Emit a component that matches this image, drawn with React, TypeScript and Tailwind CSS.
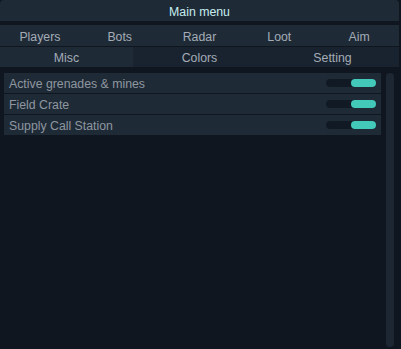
import React from "react";

const topTabs = ["Players", "Bots", "Radar", "Loot", "Aim"];
const subTabs = ["Misc", "Colors", "Setting"];
const items = ["Active grenades & mines", "Field Crate", "Supply Call Station"];

const Toggle = () => (
  <div className="flex h-[8px] w-[50px] rounded-[4px] bg-[#111a24]">
    <div className="ml-auto h-full w-[25px] rounded-[4px] bg-[#43c9ba]" />
  </div>
);

export default function App() {
  return (
    <div
      className="flex h-[349px] w-[401px] flex-col bg-[#0f161f] pr-[2px] text-[12.3px]"
      style={{ fontFamily: '"Liberation Sans", Arial, sans-serif' }}
    >
      <div className="flex h-[21px] items-center justify-center rounded-t-[4px] bg-[#1f2a37] pt-[4px] text-[#c6eef0]">
        Main menu
      </div>
      <div className="mt-[4px] grid h-[21px] grid-cols-5 bg-[#1f2a37] pt-[3px] text-[#a3acb6]">
        {topTabs.map((t) => (
          <div key={t} className="flex items-center justify-center">
            {t}
          </div>
        ))}
      </div>
      <div className="mt-[1px] grid h-[20px] grid-cols-3 bg-[#19232f] text-[#a3acb6]">
        {subTabs.map((t, i) => (
          <div
            key={t}
            className={`flex items-center justify-center pt-[2px] ${i === 0 ? "bg-[#1f2a37]" : ""}`}
          >
            {t}
          </div>
        ))}
      </div>
      <div className="flex flex-1 gap-[5px] pb-[2px] pl-[4px] pt-[6px]">
        <div className="flex w-[377px] flex-col gap-[1px] self-start">
          {items.map((name) => (
            <div
              key={name}
              className="flex h-[20px] items-center justify-between bg-[#1f2a37] pl-[5px] pr-[5px] text-[#8e979f]"
            >
              <span className="pt-[2px]">{name}</span>
              <Toggle />
            </div>
          ))}
        </div>
        <div className="w-[8px] rounded-[4px] bg-[#1d2733]" />
      </div>
    </div>
  );
}
